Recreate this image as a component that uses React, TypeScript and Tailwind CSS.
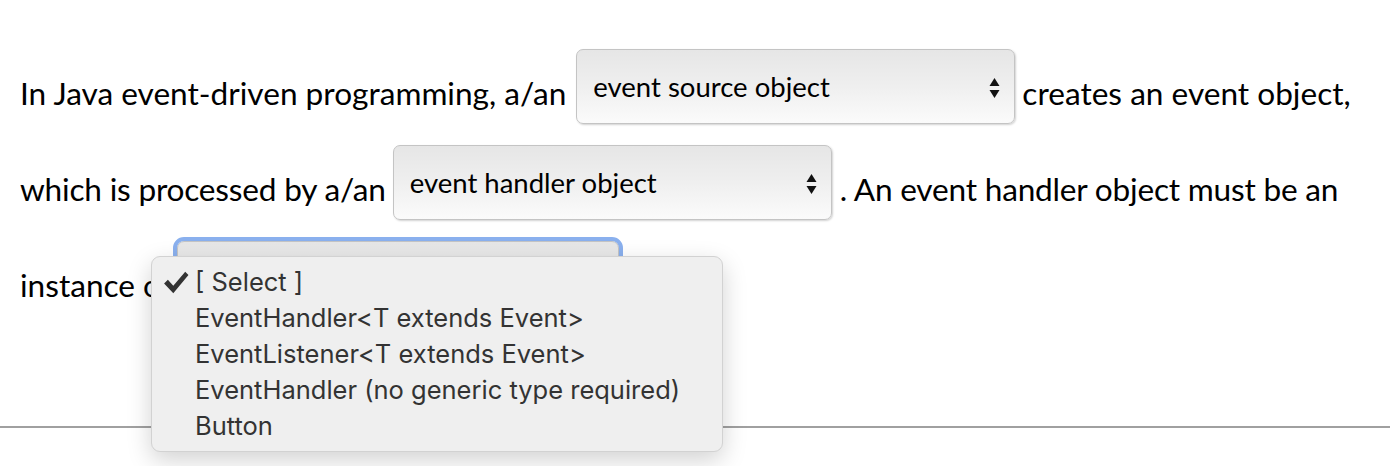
import { useState } from "react";

const SelectBox = ({ value, width, focused }: { value: string; width: string; focused?: boolean }) => (
  <div
    className={`relative h-[75px] ${width} shrink-0 rounded-[7px] border border-[#c4c4c4] bg-gradient-to-b from-[#e6e6e6] via-[#efefef] to-[#fbfbfb] shadow-[1px_1px_2px_rgba(0,0,0,0.18)] ${
      focused ? "outline-[4px] outline outline-[#8ab0ee] outline-offset-0" : ""
    }`}
  >
    <span className="absolute left-[16px] top-[21px] text-[27.5px] leading-[32px] text-black">{value}</span>
    <svg className="absolute right-[14px] top-[27px]" width="11" height="22" viewBox="0 0 11 22">
      <path d="M5.5 1 L10.5 9 H0.5 Z" fill="#111" />
      <path d="M5.5 21 L10.5 13 H0.5 Z" fill="#111" />
    </svg>
  </div>
);

const options = [
  "[ Select ]",
  "EventHandler<T extends Event>",
  "EventListener<T extends Event>",
  "EventHandler (no generic type required)",
  "Button",
];

export default function App() {
  const [selected] = useState(0);

  return (
    <div className="relative h-[466px] w-[1390px] overflow-hidden bg-white font-['Lato',sans-serif] text-[31.6px] text-black">
      <div className="flex flex-col pl-[20px] pt-[38px]">
        <div className="flex h-[96px] items-center">
          <span className="pt-[16px]">In Java event-driven programming, a/an</span>
          <div className="ml-[10px] mr-[7px]">
            <SelectBox value="event source object" width="w-[439px]" />
          </div>
          <span className="pt-[16px]">creates an event object,</span>
        </div>
        <div className="flex h-[96px] items-center">
          <span className="pt-[16px] tracking-[-0.2px]">which is processed by a/an</span>
          <div className="ml-[7px] mr-[8px]">
            <SelectBox value="event handler object" width="w-[439px]" />
          </div>
          <span className="pt-[16px] tracking-[-0.2px]">. An event handler object must be an</span>
        </div>
        <div className="flex h-[96px] items-center">
          <span className="pt-[16px]">instance of</span>
          <div className="ml-[5px] mr-[7px]">
            <SelectBox value="[ Select ]" width="w-[442px]" focused />
          </div>
          <span className="pt-[16px]">.</span>
        </div>
      </div>

      <div className="mt-[100px] h-[1.5px] w-full bg-[#a0a0a0]" />

      {/* open dropdown menu */}
      <div className="absolute left-[151px] top-[256px] h-[196px] w-[572px] rounded-[9px] border border-[#d2d2d2] bg-[#efefef] pt-[7px] font-['Inter',sans-serif] text-[25.5px] text-[#333] shadow-[0_8px_24px_rgba(0,0,0,0.18)]">
        {options.map((o, i) => (
          <div key={o} className="flex h-[36px] items-center">
            <span className="flex w-[43px] justify-end pr-[6px]">
              {i === selected && (
                <svg width="26" height="25" viewBox="0 0 24 22">
                  <path d="M1 12 L4.5 8.5 L9.5 14 L20.5 1 L23.5 4 L9.5 21 Z" fill="#333" />
                </svg>
              )}
            </span>
            <span>{o}</span>
          </div>
        ))}
      </div>
    </div>
  );
}
